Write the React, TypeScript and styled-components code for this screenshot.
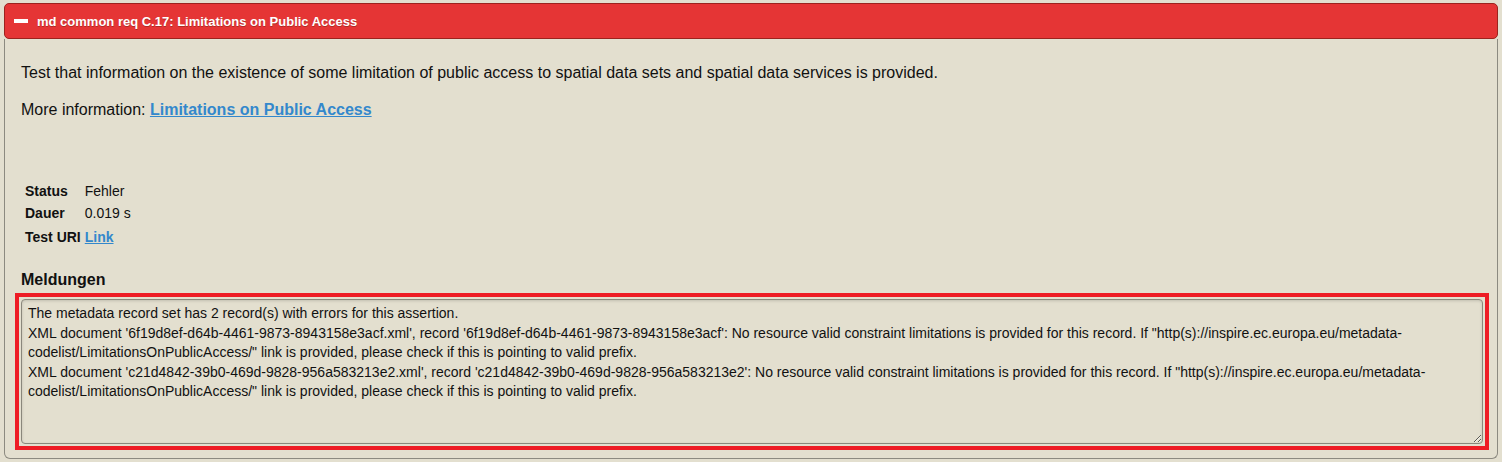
import React from 'react';
import styled, { createGlobalStyle } from 'styled-components';

const GlobalStyle = createGlobalStyle`
  body {
    margin: 0;
    padding: 0;
    background: #e3dfcf;
    font-family: "Liberation Sans", Arial, sans-serif;
    color: #111;
  }
`;

const Collapsible = styled.div`
  margin: 3px 4px 4px;
`;

const Header = styled.div`
  display: flex;
  align-items: center;
  gap: 9px;
  height: 34px;
  padding: 0 9px;
  background: #e53535;
  border: 1px solid #9c231e;
  border-radius: 5px;
  color: #fff;
  font-size: 13px;
  font-weight: bold;
  text-shadow: 0 1px 0 #b02a26;
`;

const Dash = styled.span`
  display: block;
  width: 14px;
  height: 4px;
  background: #fff;
`;

const Content = styled.div`
  border: 1px solid #8c8a80;
  border-top: none;
  border-radius: 0 0 6px 6px;
  padding: 24px 16px 8px;
`;

const Para = styled.p<{ $gap?: number }>`
  margin: 0 0 ${(p) => p.$gap ?? 0}px;
  font-size: 16px;
  line-height: 20px;
`;

const Anchor = styled.a`
  color: #3388cc;
  font-weight: bold;
  text-decoration: underline;
`;

const Info = styled.table`
  margin: 60px 0 0 2px;
  border-collapse: collapse;
  font-size: 14px;
`;

const Row = styled.tr<{ $h?: number }>`
  height: ${(p) => p.$h ?? 22}px;
`;

const Label = styled.th`
  text-align: left;
  font-weight: bold;
  padding: 0 4px 0 2px;
`;

const Value = styled.td`
  padding: 0;
`;

const Heading = styled.h3`
  margin: 21px 0 3px;
  font-size: 16px;
  line-height: 20px;
  font-weight: bold;
`;

const Highlight = styled.div`
  margin: 0 -8px 0 -6px;
  padding: 2px;
  border: 4px solid #ee1c25;
`;

const Messages = styled.textarea`
  display: block;
  box-sizing: border-box;
  width: 100%;
  height: 145px;
  margin: 0;
  padding: 4px 6px;
  font-family: "Liberation Sans", Arial, sans-serif;
  font-size: 14px;
  line-height: 19.6px;
  color: #111;
  background: #e3dfcf;
  border: 1px solid #8a877c;
  border-radius: 4px;
  box-shadow: inset 0 1px 3px rgba(0, 0, 0, 0.15);
  outline: none;
  resize: vertical;
`;

const messages = [
  'The metadata record set has 2 record(s) with errors for this assertion.',
  "XML document '6f19d8ef-d64b-4461-9873-8943158e3acf.xml', record '6f19d8ef-d64b-4461-9873-8943158e3acf': No resource valid constraint limitations is provided for this record. If \"http(s)://inspire.ec.europa.eu/metadata-codelist/LimitationsOnPublicAccess/\" link is provided, please check if this is pointing to valid prefix.",
  "XML document 'c21d4842-39b0-469d-9828-956a583213e2.xml', record 'c21d4842-39b0-469d-9828-956a583213e2': No resource valid constraint limitations is provided for this record. If \"http(s)://inspire.ec.europa.eu/metadata-codelist/LimitationsOnPublicAccess/\" link is provided, please check if this is pointing to valid prefix.",
].join('\n');

const App = (): JSX.Element => {
  return (
    <>
      <GlobalStyle />
      <Collapsible>
        <Header>
          <Dash />
          md common req C.17: Limitations on Public Access
        </Header>
        <Content>
          <Para $gap={17}>
            Test that information on the existence of some limitation of public access to spatial data sets and
            spatial data services is provided.
          </Para>
          <Para>
            More information: <Anchor href="#">Limitations on Public Access</Anchor>
          </Para>
          <Info>
            <tbody>
              <Row>
                <Label>Status</Label>
                <Value>Fehler</Value>
              </Row>
              <Row>
                <Label>Dauer</Label>
                <Value>0.019 s</Value>
              </Row>
              <Row $h={25}>
                <Label>Test URI</Label>
                <Value>
                  <Anchor href="#">Link</Anchor>
                </Value>
              </Row>
            </tbody>
          </Info>
          <Heading>Meldungen</Heading>
          <Highlight>
            <Messages readOnly value={messages} />
          </Highlight>
        </Content>
      </Collapsible>
    </>
  );
};

export default App;
